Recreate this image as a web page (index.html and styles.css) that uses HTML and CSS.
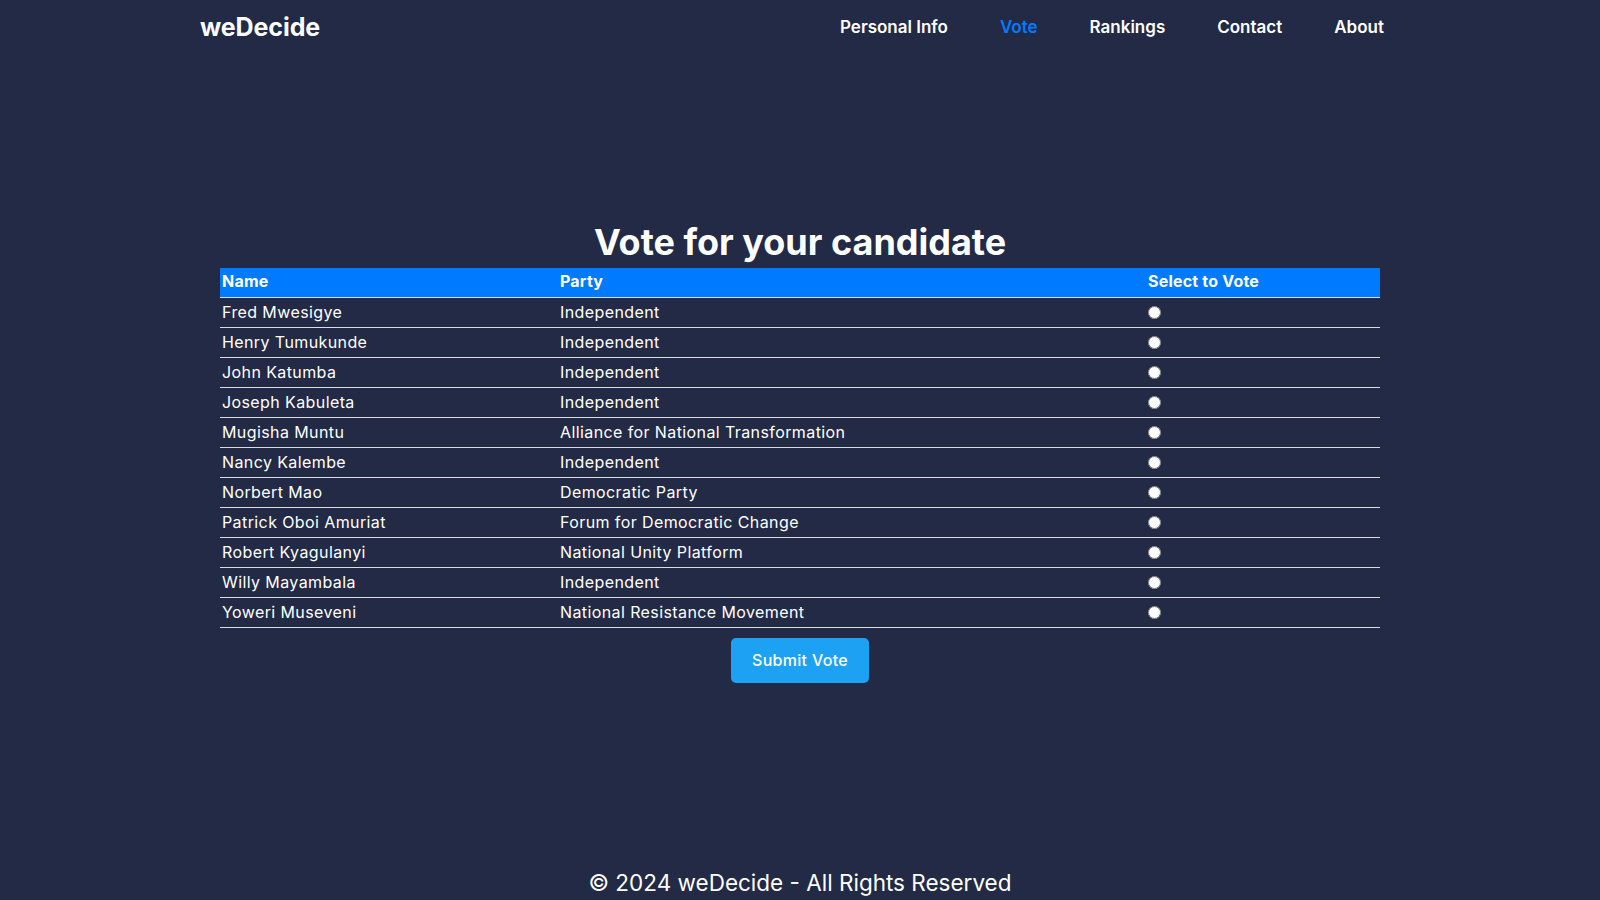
FILE: index.html
```html
<!DOCTYPE html>
<html lang="en">
<head>
<meta charset="utf-8">
<title>weDecide - Vote</title>
<link rel="stylesheet" href="styles.css">
</head>
<body>
<header class="site-header">
  <div class="logo">weDecide</div>
  <nav class="nav">
    <a href="#" class="nav-link">Personal Info</a>
    <a href="#" class="nav-link active">Vote</a>
    <a href="#" class="nav-link">Rankings</a>
    <a href="#" class="nav-link">Contact</a>
    <a href="#" class="nav-link">About</a>
  </nav>
</header>
<main class="main">
  <h1 class="title">Vote for your candidate</h1>
  <form class="vote-form">
    <table class="vote-table">
      <colgroup>
        <col class="col-name">
        <col class="col-party">
        <col class="col-select">
      </colgroup>
      <thead>
        <tr><th>Name</th><th>Party</th><th>Select to Vote</th></tr>
      </thead>
      <tbody>
        <tr><td>Fred Mwesigye</td><td>Independent</td><td><input type="radio" name="c" class="radio"></td></tr>
        <tr><td>Henry Tumukunde</td><td>Independent</td><td><input type="radio" name="c" class="radio"></td></tr>
        <tr><td>John Katumba</td><td>Independent</td><td><input type="radio" name="c" class="radio"></td></tr>
        <tr><td>Joseph Kabuleta</td><td>Independent</td><td><input type="radio" name="c" class="radio"></td></tr>
        <tr><td>Mugisha Muntu</td><td>Alliance for National Transformation</td><td><input type="radio" name="c" class="radio"></td></tr>
        <tr><td>Nancy Kalembe</td><td>Independent</td><td><input type="radio" name="c" class="radio"></td></tr>
        <tr><td>Norbert Mao</td><td>Democratic Party</td><td><input type="radio" name="c" class="radio"></td></tr>
        <tr><td>Patrick Oboi Amuriat</td><td>Forum for Democratic Change</td><td><input type="radio" name="c" class="radio"></td></tr>
        <tr><td>Robert Kyagulanyi</td><td>National Unity Platform</td><td><input type="radio" name="c" class="radio"></td></tr>
        <tr><td>Willy Mayambala</td><td>Independent</td><td><input type="radio" name="c" class="radio"></td></tr>
        <tr><td>Yoweri Museveni</td><td>National Resistance Movement</td><td><input type="radio" name="c" class="radio"></td></tr>
      </tbody>
    </table>
    <button type="button" class="submit">Submit Vote</button>
  </form>
</main>
<footer class="footer">© 2024 weDecide - All Rights Reserved</footer>
</body>
</html>
```
FILE: styles.css
```css
* { box-sizing: border-box; }
html, body {
  margin: 0;
  padding: 0;
  background: #222a45;
  color: #ffffff;
  font-family: Inter, "Open Sans", "DejaVu Sans", sans-serif;
}
.site-header {
  width: 1200px;
  margin: 0 auto;
  height: 54px;
  padding-right: 16px;
  display: flex;
  align-items: center;
  justify-content: space-between;
}
.logo {
  font-size: 25px;
  font-weight: 700;
  letter-spacing: -0.1px;
}
.nav {
  display: flex;
  gap: 52px;
}
.nav-link {
  color: #ffffff;
  text-decoration: none;
  font-size: 17px;
  font-weight: 600;
}
.nav-link.active { color: #007bff; }
.main {
  width: 1200px;
  margin: 0 auto;
  padding: 167px 20px 0;
  display: flex;
  flex-direction: column;
  align-items: center;
}
.title {
  margin: 0 0 4px;
  font-size: 36px;
  line-height: 43px;
  font-weight: 700;
  letter-spacing: 0;
}
.vote-form {
  width: 100%;
  display: flex;
  flex-direction: column;
  align-items: center;
}
.vote-table {
  width: 1160px;
  table-layout: fixed;
  border-collapse: collapse;
  font-size: 16px;
}
.col-name { width: 338px; }
.col-party { width: 588px; }
.col-select { width: 234px; }
.vote-table th,
.vote-table td {
  text-align: left;
  padding: 5px 2px;
  line-height: 19px;
  height: 30px;
  border-bottom: 1px solid #dcdde2;
}
.vote-table th {
  height: 29px;
  padding: 4px 2px 5px;
  background: #007bff;
  font-weight: 700;
  letter-spacing: 0.2px;
}
.vote-table td {
  font-weight: 400;
  letter-spacing: 0.4px;
}
.radio {
  margin: 0;
  width: 13px;
  height: 13px;
  vertical-align: middle;
  position: relative;
  top: -1px;
}
.submit {
  margin-top: 10px;
  width: 138px;
  height: 45px;
  border: none;
  border-radius: 5px;
  background: #1da1f2;
  color: #ffffff;
  font-family: inherit;
  font-size: 16px;
  font-weight: 500;
  letter-spacing: 0.3px;
}
.footer {
  margin-top: 185px;
  text-align: center;
  font-size: 22.5px;
  line-height: 29px;
}
```
